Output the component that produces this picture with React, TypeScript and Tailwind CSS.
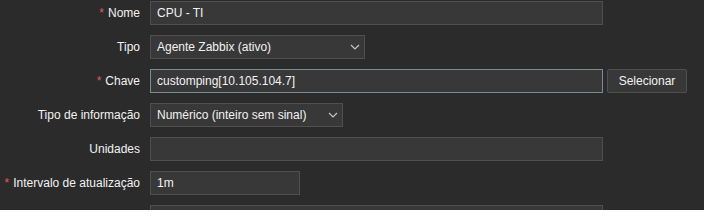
const FONT = { fontFamily: '"Liberation Sans", Arial, sans-serif' };

function Label({ text, required }: { text: string; required?: boolean }) {
  return (
    <div className="flex w-[140px] shrink-0 items-center justify-end text-[12px] text-[#f2f2f2]">
      {required && <span className="mr-[4px] text-[#e45959]">*</span>}
      <span>{text}</span>
    </div>
  );
}

function TextBox({ value, width, focused }: { value: string; width: string; focused?: boolean }) {
  return (
    <div
      className={`flex h-[24px] items-center border bg-[#383838] px-[6px] text-[12px] text-[#f2f2f2] ${width} ${
        focused ? "border-[#768d99]" : "border-[#4f4f4f]"
      }`}
    >
      {value}
    </div>
  );
}

function Select({ value, width }: { value: string; width: string }) {
  return (
    <div
      className={`flex h-[24px] items-center justify-between border border-[#4f4f4f] bg-[#383838] pl-[6px] pr-[4px] text-[12px] text-[#f2f2f2] ${width}`}
    >
      <span>{value}</span>
      <svg width="10" height="6" viewBox="0 0 10 6" className="text-[#c4c4c4]">
        <polyline points="1,1 5,5 9,1" fill="none" stroke="currentColor" strokeWidth="1.2" />
      </svg>
    </div>
  );
}

function Row({ children }: { children: React.ReactNode }) {
  return <div className="flex h-[24px] gap-[10px]">{children}</div>;
}

export default function App() {
  return (
    <div style={FONT} className="h-[210px] overflow-hidden bg-[#2b2b2b]">
      <div className="flex flex-col gap-[10px] pt-[1px]">
        <Row>
          <Label text="Nome" required />
          <TextBox value="CPU - TI" width="w-[453px]" />
        </Row>
        <Row>
          <Label text="Tipo" />
          <Select value="Agente Zabbix (ativo)" width="w-[215px]" />
        </Row>
        <Row>
          <Label text="Chave" required />
          <div className="flex gap-[4px]">
            <TextBox value="customping[10.105.104.7]" width="w-[453px]" focused />
            <button className="flex h-[24px] w-[80px] items-center justify-center rounded-[2px] border border-[#4f4f4f] bg-[#383838] text-[12px] text-[#f2f2f2]">
              Selecionar
            </button>
          </div>
        </Row>
        <Row>
          <Label text="Tipo de informação" />
          <Select value="Numérico (inteiro sem sinal)" width="w-[193px]" />
        </Row>
        <Row>
          <Label text="Unidades" />
          <TextBox value="" width="w-[453px]" />
        </Row>
        <Row>
          <Label text="Intervalo de atualização" required />
          <TextBox value="1m" width="w-[150px]" />
        </Row>
        <Row>
          <div className="w-[140px] shrink-0" />
          <TextBox value="" width="w-[453px]" />
        </Row>
      </div>
    </div>
  );
}
